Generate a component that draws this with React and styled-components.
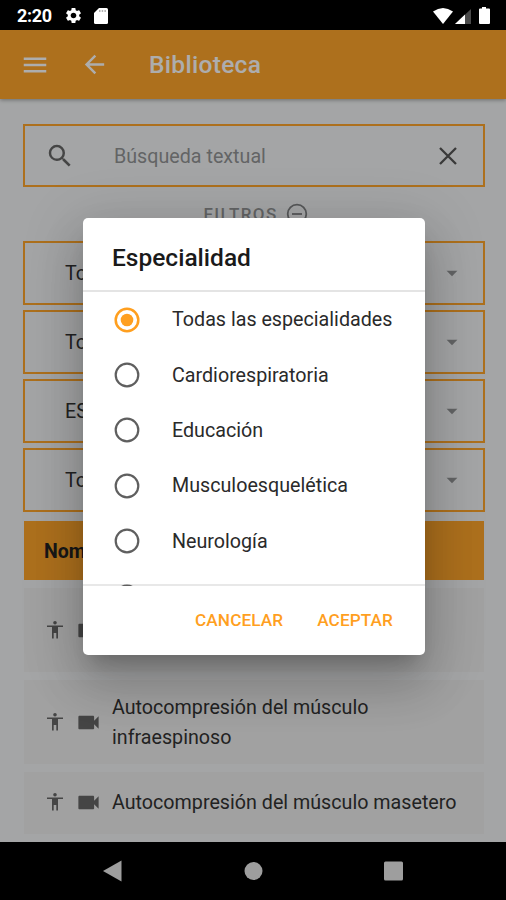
import React, { useState } from "react";
import styled, { createGlobalStyle } from "styled-components";
import {
  MdArrowBack,
  MdArrowDropDown,
  MdMenu,
  MdSearch,
  MdSettings,
  MdVideocam,
} from "react-icons/md";

const specialities = [
  "Todas las especialidades",
  "Cardiorespiratoria",
  "Educación",
  "Musculoesquelética",
  "Neurología",
  "",
];

const filters = ["Todas", "Todas", "ES", "Todos"];

const exercises = [
  { name: "" },
  { name: "Autocompresión del músculo infraespinoso" },
  { name: "Autocompresión del músculo masetero", last: true },
];

const StatusBar = () => (
  <Status>
    <Clock>2:20</Clock>
    <MdSettings size={19} />
    <SdCard width="14" height="16" viewBox="0 0 14 16">
      <path d="M5 0h7.5Q14 0 14 1.5v13q0 1.5-1.5 1.5h-11Q0 16 0 14.500V5z" fill="#fff" />
      <path d="M5 2.200h1.500v1.600H5zM7.700 2.200h1.500v1.600H7.700zM10.400 2.200h1.500v1.600h-1.500z" fill="#999" />
    </SdCard>
    <Signals width="58" height="18" viewBox="0 0 58 18">
      <path d="M0 4.500Q10 -2.500 20 4.500L10 17z" fill="#fff" />
      <path d="M22 17L38 2v15z" fill="#4a4a4a" />
      <path d="M22 17L32 7.600V17z" fill="#fff" />
      <path d="M49 0h4v1.500h3q1 0 1 1V16q0 1-1 1H47q-1 0-1-1V2.500q0-1 1-1h2z" fill="#fff" />
    </Signals>
  </Status>
);

const BodyIcon = () => (
  <svg width="18" height="20" viewBox="0 0 18 20" fill="currentColor">
    <circle cx="9" cy="2.700" r="1.800" />
    <path d="M1 5.500h16v1.500h-5V18.500h-1.700V13H7.700v5.500H6V7H1z" />
  </svg>
);

const Radio = ({ checked }) => (
  <svg width="26" height="26" viewBox="0 0 26 26">
    <circle
      cx="13"
      cy="13"
      r="11.3"
      fill="none"
      stroke={checked ? "#ff9f1f" : "#5f5f5f"}
      strokeWidth={checked ? 2.5 : 2.2}
    />
    {checked && <circle cx="13" cy="13" r="6.3" fill="#ff9f1f" />}
  </svg>
);

const App = () => {
  const [selected, setSelected] = useState(0);

  return (
    <Screen>
      <GlobalStyle />
      <StatusBar />
      <Toolbar>
        <MdMenu size={30} />
        <MdArrowBack size={29} />
        <ToolbarTitle>Biblioteca</ToolbarTitle>
      </Toolbar>
      <Content>
        <SearchBox>
          <MdSearch size={30} />
          <Placeholder>Búsqueda textual</Placeholder>
          <svg width="18" height="18" viewBox="0 0 18 18">
            <path d="M1 1l16 16M17 1L1 17" stroke="#555" strokeWidth="2.3" />
          </svg>
        </SearchBox>
        <FilterToggle>
          FILTROS
          <svg width="22" height="22" viewBox="0 0 22 22">
            <g fill="none" stroke="#808284" strokeWidth="1.800">
              <circle cx="11" cy="11" r="9.300" />
              <path d="M6 11h10" />
            </g>
          </svg>
        </FilterToggle>
        <Filters>
          {filters.map((label, i) => (
            <Select key={i}>
              {label}
              <MdArrowDropDown size={26} />
            </Select>
          ))}
        </Filters>
        <TableHeader>Nombre</TableHeader>
        <Rows>
          {exercises.map(({ name, last }, i) => (
            <Row key={i} $last={last}>
              <BodyIcon />
              <MdVideocam size={27} />
              <RowName>{name}</RowName>
            </Row>
          ))}
        </Rows>
      </Content>
      <NavBar>
        <svg width="300" height="22" viewBox="0 0 300 22">
          <g fill="#9e9e9e">
            <path d="M0 11L18.500 0.500v21z" />
            <circle cx="150.500" cy="11" r="9" />
            <rect x="281" y="1.500" width="19" height="19" rx="1.500" />
          </g>
        </svg>
      </NavBar>
      <Scrim>
        <Dialog>
          <DialogTitle>Especialidad</DialogTitle>
          <Options>
            {specialities.map((name, i) => (
              <Option key={name} onClick={() => setSelected(i)}>
                <Radio checked={selected === i} />
                {name}
              </Option>
            ))}
          </Options>
          <DialogFooter>
            <DialogButton>CANCELAR</DialogButton>
            <DialogButton>ACEPTAR</DialogButton>
          </DialogFooter>
        </Dialog>
      </Scrim>
    </Screen>
  );
};

const GlobalStyle = createGlobalStyle`
  * {
    box-sizing: border-box;
  }

  body {
    margin: 0;
    background-color: black;
    font-family: Roboto, sans-serif;
  }

  svg {
    display: block;
    flex-shrink: 0;
  }
`;

const Screen = styled.div`
  background-color: #f2f4f5;

  display: flex;
  flex-direction: column;

  height: 900px;
  width: 506px;

  overflow: hidden;
  position: relative;
`;

const Status = styled.div`
  background-color: black;
  color: white;

  display: flex;
  align-items: center;
  flex-shrink: 0;

  height: 30px;
  padding: 0 15px 0 17px;

  position: relative;
  z-index: 2;
`;

const Clock = styled.div`
  font-size: 18px;
  font-weight: 700;
  letter-spacing: -0.3px;

  width: 35px;
  margin: 1px 12px 0 0;
`;

const SdCard = styled.svg`
  margin: 1px 0 0 11px;
`;

const Signals = styled.svg`
  margin: 1px 0 0 auto;
`;

const Toolbar = styled.header`
  background-color: #ffa52c;
  box-shadow: 0 1px 4px rgba(0, 0, 0, 0.35);
  color: white;

  display: flex;
  align-items: center;
  flex-shrink: 0;
  gap: 30px;

  height: 69px;
  padding: 0 20px;
`;

const ToolbarTitle = styled.div`
  font-size: 24.5px;
  font-weight: 500;
  letter-spacing: 0.3px;

  margin-left: 10px;
`;

const Content = styled.main`
  display: flex;
  flex-direction: column;
  flex-grow: 1;

  min-height: 0;
  overflow: hidden;
  padding: 25px 21px 0 23px;
`;

const SearchBox = styled.div`
  border: 2px solid #ffa52c;
  color: #666;

  display: flex;
  align-items: center;
  flex-shrink: 0;

  height: 63px;
  padding: 0 26px 0 20px;
`;

const Placeholder = styled.div`
  color: #929496;
  flex-grow: 1;
  font-size: 19.7px;
  margin-left: 39px;
  padding-top: 2px;
`;

const FilterToggle = styled.div`
  color: #929496;

  display: flex;
  align-items: center;
  justify-content: center;
  flex-shrink: 0;
  gap: 8px;

  font-size: 17px;
  font-weight: 500;
  letter-spacing: 1.4px;

  height: 54px;
  padding-left: 3px;
`;

const Filters = styled.div`
  display: flex;
  flex-direction: column;
  flex-shrink: 0;
  gap: 5px;
`;

const Select = styled.div`
  border: 2px solid #ffa52c;
  color: #333;

  display: flex;
  align-items: center;
  justify-content: space-between;

  font-size: 19.7px;

  height: 64px;
  padding: 0 18px 0 40px;

  svg {
    color: #929496;
  }
`;

const TableHeader = styled.div`
  background-color: #ffa52c;
  color: #222;

  display: flex;
  align-items: center;
  flex-shrink: 0;

  font-size: 19.5px;
  font-weight: 700;

  height: 59px;
  margin: 9px 1px 8px;
  padding: 2px 0 0 20px;
`;

const Rows = styled.div`
  display: flex;
  flex-direction: column;
  gap: 8px;

  margin: 0 1px;
`;

const Row = styled.div`
  background-color: #eee;
  color: #666;

  display: flex;
  align-items: center;

  height: ${(props) => (props.$last ? "62px" : "84px")};
  padding: ${(props) => (props.$last ? "0 0 2px 22px" : "0 0 0 22px")};

  svg + svg {
    margin-left: 11px;
  }
`;

const RowName = styled.div`
  color: #333;
  font-size: 19.7px;
  line-height: 30px;

  margin-left: 10px;
  padding-top: 1px;
  max-width: 350px;
`;

const NavBar = styled.footer`
  background-color: black;

  display: flex;
  align-items: center;
  justify-content: center;
  flex-shrink: 0;

  height: 58px;

  position: relative;
  z-index: 2;
`;

const Scrim = styled.div`
  background-color: rgba(0, 0, 0, 0.32);

  display: flex;
  align-items: center;
  justify-content: center;

  position: absolute;
  inset: 30px 0 58px;
  padding: 1px 0 0 2px;
`;

const Dialog = styled.div`
  background-color: white;
  border-radius: 5px;
  box-shadow: 0 14px 18px -9px rgba(0, 0, 0, 0.2),
    0 30px 47px 4px rgba(0, 0, 0, 0.14), 0 11px 57px 10px rgba(0, 0, 0, 0.12);

  display: flex;
  flex-direction: column;

  height: 437px;
  width: 342px;
`;

const DialogTitle = styled.div`
  border-bottom: 2px solid #e4e4e4;
  color: #1a1a1a;

  display: flex;
  align-items: center;
  flex-shrink: 0;

  font-size: 24.5px;
  font-weight: 500;

  height: 74px;
  padding: 6px 29px 0;
`;

// overlaps the footer border so a cut-off radio stays visible over it
const Options = styled.div`
  flex-grow: 1;
  margin-bottom: -2px;
  overflow: hidden;

  position: relative;
  z-index: 1;
`;

const Option = styled.div`
  color: #2a2a2a;
  cursor: pointer;

  display: flex;
  align-items: center;
  gap: 32px;

  font-size: 19.7px;

  height: 55.4px;
  padding-left: 31px;
`;

const DialogFooter = styled.div`
  border-top: 2px solid #e8e8e8;

  display: flex;
  align-items: center;
  justify-content: flex-end;
  flex-shrink: 0;
  gap: 34px;

  height: 71px;
  padding: 0 32px 1px 0;
`;

const DialogButton = styled.div`
  color: #ff9f1f;
  cursor: pointer;
  font-size: 17.2px;
  font-weight: 500;
  letter-spacing: 0.1px;
`;

export default App;
